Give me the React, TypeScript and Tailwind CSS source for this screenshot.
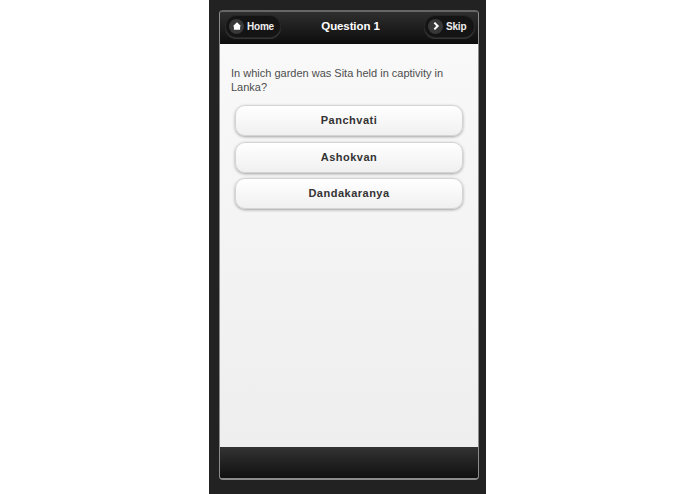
import React from 'react';

const ANSWERS = ['Panchvati', 'Ashokvan', 'Dandakaranya'];

const HeaderButton: React.FC<{ label: string; icon: React.ReactNode; width: string }> = ({ label, icon, width }) => (
  <div className={`flex h-[23px] items-center gap-[3px] rounded-full border border-[#262626] bg-[#141414] pl-[3px] shadow-[0_1px_0_rgba(255,255,255,0.14)] ${width}`}>
    <span className="flex h-[15px] w-[15px] items-center justify-center rounded-full bg-[#383838]">{icon}</span>
    <span className="text-[10px] font-bold tracking-[-0.2px] text-[#eeeeee]">{label}</span>
  </div>
);

export default function App() {
  return (
    <div className="flex h-[494px] w-[695px] justify-center overflow-hidden bg-white font-['Liberation_Sans',Arial,sans-serif]">
      <div className="h-[494px] w-[277px] bg-[#222222] pb-[14px] pl-[10px] pr-[7px] pt-[10px]">
        <div className="flex h-[470px] flex-col overflow-hidden rounded-[4px] border border-[#8c8c8c] border-b-[2px] border-t-[2px] border-t-[#666666]">
          {/* Header */}
          <header className="flex h-[32px] flex-shrink-0 items-center justify-between bg-gradient-to-b from-[#2f2f2f] to-[#0d0d0d] pb-[4px] pl-[5px] pr-[3px]">
            <HeaderButton
              width="w-[56px]"
              label="Home"
              icon={
                <svg viewBox="0 0 12 12" className="h-[10px] w-[10px]" fill="white">
                  <path d="M6 1.5 11 6.2 9.7 6.2V10.5H2.3V6.2H1Z" />
                </svg>
              }
            />
            <h1 className="mr-[4px] mt-[1px] text-[11.5px] font-bold tracking-[-0.1px] text-white">Question 1</h1>
            <HeaderButton
              width="w-[51px]"
              label="Skip"
              icon={
                <svg viewBox="0 0 12 12" className="h-[10px] w-[10px]" fill="none" stroke="white" strokeWidth="2.4">
                  <path d="M4 2 8 6 4 10" />
                </svg>
              }
            />
          </header>

          {/* Content */}
          <main className="flex-1 bg-gradient-to-b from-[#f9f9f9] to-[#eeeeee] pl-[11px] pr-[12px] pt-[22px]">
            <p className="text-[11px] leading-[14px] text-[#4d4d4d]">
              In which garden was Sita held in captivity in Lanka?
            </p>
            <div className="mt-[11px] flex flex-col gap-[5.5px] pl-[4px] pr-[3px]">
              {ANSWERS.map((answer) => (
                <button
                  key={answer}
                  className="flex h-[31px] items-center justify-center rounded-[10px] border border-[#d4d4d4] bg-gradient-to-b from-white to-[#f0f0f0] text-[11px] font-bold tracking-[0.5px] text-[#333333] shadow-[0_1px_3px_rgba(0,0,0,0.35)]"
                >
                  {answer}
                </button>
              ))}
            </div>
          </main>

          {/* Footer */}
          <footer className="h-[31px] flex-shrink-0 bg-gradient-to-b from-[#333333] to-[#111111]" />
        </div>
      </div>
    </div>
  );
}
